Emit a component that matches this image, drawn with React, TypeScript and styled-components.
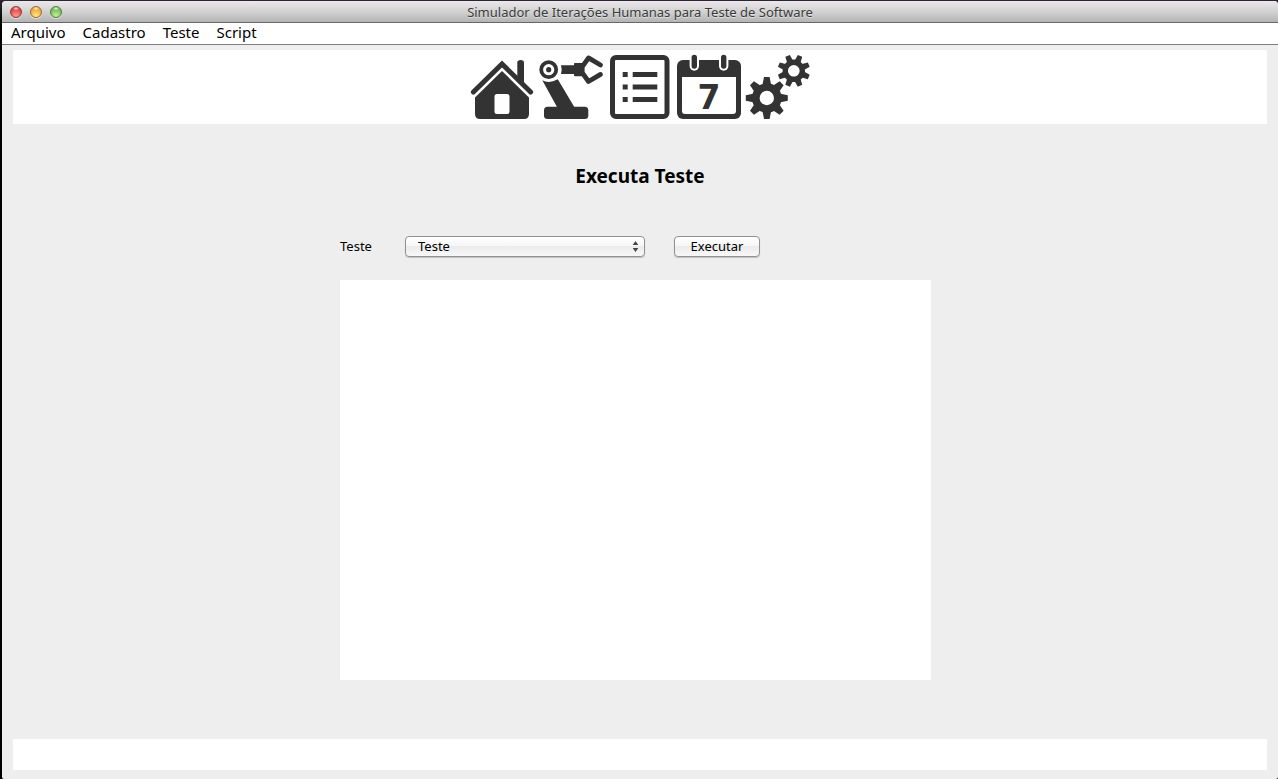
import React from "react";
import styled, { createGlobalStyle } from "styled-components";

const INK = "#333333";

const GlobalStyle = createGlobalStyle`
  *, *::before, *::after { box-sizing: border-box; }
  body {
    margin: 0;
    background: #000;
    font-family: "Noto Sans", "Open Sans", sans-serif;
    color: #000;
  }
`;

const Desktop = styled.div`
  min-height: 100vh;
  display: flex;
  padding: 1px 0 0 2px;
  background: linear-gradient(#2a2730, #000 24px);
`;

const Window = styled.div`
  flex: 1;
  min-width: 0;
  display: flex;
  flex-direction: column;
  background: #eeeeee;
  border-radius: 4px 4px 2px 2px;
  overflow: hidden;
`;

const TitleBar = styled.header`
  display: grid;
  grid-template-columns: 1fr auto 1fr;
  align-items: center;
  height: 22px;
  padding: 0 8px;
  border-bottom: 1px solid #686868;
  background: linear-gradient(#ebe7eb, #d2d2d2 50%, #b4b4b4);
`;

const WindowControls = styled.div`
  display: flex;
  gap: 8px;
`;

const Light = styled.button<{ $edge: string; $base: string; $glow: string }>`
  width: 12px;
  height: 12px;
  padding: 0;
  border: 1px solid ${(p) => p.$edge};
  border-radius: 50%;
  background:
    radial-gradient(ellipse 3px 2px at 50% 15%, #ffffffdd, #ffffff00),
    radial-gradient(circle at 50% 90%, ${(p) => p.$glow}, ${(p) => p.$base} 70%);
  box-shadow: 0 1px 0 #ffffff88;
`;

const WindowTitle = styled.span`
  font-size: 13px;
  line-height: 20px;
  color: #3a3a3a;
  text-shadow: 0 1px 0 #ffffff80;
  white-space: nowrap;
`;

const MenuBar = styled.nav`
  display: flex;
  align-items: flex-start;
  gap: 17px;
  height: 22px;
  padding: 0 9px;
  background: #fff;
  border-bottom: 1px solid #808080;
`;

const MenuButton = styled.button`
  padding: 0;
  border: 0;
  background: none;
  font: inherit;
  font-size: 15px;
  line-height: 19px;
  color: #000;
`;

const Content = styled.div`
  flex: 1;
  display: flex;
  flex-direction: column;
  padding: 5px 11px 9px;
`;

const Toolbar = styled.div`
  display: flex;
  justify-content: center;
  gap: 5px;
  padding: 5px 0;
  background: #fff;
`;

const ToolButton = styled.button`
  display: block;
  width: 64px;
  height: 64px;
  padding: 0;
  border: 0;
  background: none;

  svg {
    display: block;
    width: 64px;
    height: 64px;
    overflow: visible;
  }
`;

const Main = styled.main`
  width: 100%;
  max-width: 600px;
  margin: 0 auto;
  padding: 38px 0 59px;
`;

const Heading = styled.h1`
  margin: 0 0 46px;
  font-size: 19px;
  line-height: 28px;
  font-weight: 700;
  text-align: center;
`;

const Form = styled.form`
  display: flex;
  align-items: center;
  height: 21px;
  margin-bottom: 23px;
  font-size: 13px;
  line-height: 19px;
`;

const Label = styled.label`
  width: 65px;
`;

const controlFace = `
  height: 21px;
  border: 1px solid #919191;
  border-radius: 4px;
  background: linear-gradient(#ffffff, #f6f6f6 45%, #ebebeb 50%, #f8f8f8);
  box-shadow: 0 1px 1px #00000030;
  font: inherit;
  color: #000;
`;

const SelectBox = styled.div`
  position: relative;
  width: 240px;
  margin-right: 29px;

  svg {
    position: absolute;
    top: 5px;
    right: 6px;
    width: 7px;
    height: 11px;
    pointer-events: none;
  }
`;

const Select = styled.select`
  ${controlFace}
  display: block;
  width: 100%;
  padding: 0 20px 1px 12px;
  appearance: none;
`;

const RunButton = styled.button`
  ${controlFace}
  width: 86px;
  padding: 0;
`;

const Output = styled.textarea`
  display: block;
  width: calc(100% - 9px);
  height: 400px;
  padding: 4px;
  border: 0;
  background: #fff;
  resize: none;
`;

const StatusBar = styled.footer`
  height: 31px;
  margin-top: auto;
  background: #fff;
`;

const HomeIcon = () => (
  <svg viewBox="0 0 64 64" fill={INK} aria-hidden="true">
    <path d="M47.3 23V7.5Q47.3 5 50.6 5T54 7.5V29Z" />
    <path d="M3.4 37 32 9 60.6 37" fill="none" stroke={INK} strokeWidth="5" strokeLinecap="round" />
    <path d="M32 16 59 42.5V59Q59 64 54 64H10Q5 64 5 59V42.5Z" />
    <rect x="24.5" y="39" width="15" height="20" rx="2.5" fill="#fff" />
  </svg>
);

const RobotIcon = () => (
  <svg viewBox="0 0 64 64" fill={INK} aria-hidden="true">
    <circle cx="9.7" cy="14.7" r="7.5" fill="none" stroke={INK} strokeWidth="3.8" />
    <circle cx="9.7" cy="14.7" r="2.6" />
    <path d="M22 10.3H35V8.6Q35 8 36 8H44V21.3H36Q35 21.3 35 20.5V19H22Q23.3 14.7 22 10.3Z" />
    <path
      d="M61.5 10 49.5 2.9 43.2 11.8V17.6L49.5 26.5 61.5 19.4"
      fill="none"
      stroke={INK}
      strokeWidth="4.8"
      strokeLinecap="round"
      strokeLinejoin="round"
    />
    <path d="M3.3 25.3Q10 29 18.8 24.3L35.3 52H18Z" />
    <rect x="5" y="51.7" width="44.3" height="12.3" rx="3.5" />
  </svg>
);

const ListIcon = () => (
  <svg viewBox="0 0 64 64" fill={INK} aria-hidden="true">
    <rect x="4.5" y="2.5" width="54.5" height="59" rx="3.5" fill="none" stroke={INK} strokeWidth="5" />
    {[17, 29.5, 42].map((y) => (
      <g key={y}>
        <rect x="14.7" y={y} width="5" height="5" />
        <rect x="24.7" y={y} width="24.6" height="5" />
      </g>
    ))}
  </svg>
);

const CalendarIcon = () => (
  <svg viewBox="0 0 64 64" fill={INK} aria-hidden="true">
    <rect y="5" width="64" height="59" rx="6" />
    <path d="M5 22H59V56Q59 59 56 59H8Q5 59 5 56Z" fill="#fff" />
    {[17.3, 46.7].map((x) => (
      <g key={x} strokeLinecap="round">
        <path d={`M${x} 2.5V11`} stroke="#fff" strokeWidth="9.4" />
        <path d={`M${x} 2.5V11`} stroke={INK} strokeWidth="5.4" />
      </g>
    ))}
    <text x="32" y="54" textAnchor="middle" fontFamily="DejaVu Sans, sans-serif" fontWeight="700" fontSize="33">
      7
    </text>
  </svg>
);

type GearProps = { cx: number; cy: number; body: number; reach: number; hole: number; tip: number; base: number; turn: number };

const Gear = ({ cx, cy, body, reach, hole, tip, base, turn }: GearProps) => (
  <g transform={`translate(${cx} ${cy}) rotate(${turn})`}>
    <circle r={(body + hole) / 2} fill="none" stroke={INK} strokeWidth={body - hole} />
    {[0, 45, 90, 135, 180, 225, 270, 315].map((angle) => (
      <path
        key={angle}
        transform={`rotate(${angle})`}
        d={`M${-base} ${1 - body}L${-tip} ${-reach}H${tip}L${base} ${1 - body}Z`}
      />
    ))}
  </g>
);

const GearsIcon = () => (
  <svg viewBox="0 0 64 64" fill={INK} aria-hidden="true">
    <Gear cx={20.8} cy={43} body={14.8} reach={21} hole={7.2} tip={2.8} base={4.2} turn={0} />
    <Gear cx={47.8} cy={15.8} body={11.2} reach={16.2} hole={5.8} tip={2.4} base={3.1} turn={22.5} />
  </svg>
);

const tools = [
  { name: "Início", Icon: HomeIcon },
  { name: "Robô", Icon: RobotIcon },
  { name: "Lista", Icon: ListIcon },
  { name: "Agenda", Icon: CalendarIcon },
  { name: "Configurações", Icon: GearsIcon },
];

export default function App() {
  return (
    <>
      <GlobalStyle />
      <Desktop>
        <Window>
          <TitleBar>
            <WindowControls>
              <Light aria-label="Fechar" $edge="#963434" $base="#e0474a" $glow="#ff9a92" />
              <Light aria-label="Minimizar" $edge="#a06a2a" $base="#eda83c" $glow="#ffe98a" />
              <Light aria-label="Ampliar" $edge="#4f7f3c" $base="#78b85a" $glow="#c6f29c" />
            </WindowControls>
            <WindowTitle>Simulador de Iterações Humanas para Teste de Software</WindowTitle>
          </TitleBar>
          <MenuBar>
            {["Arquivo", "Cadastro", "Teste", "Script"].map((item) => (
              <MenuButton key={item} type="button">
                {item}
              </MenuButton>
            ))}
          </MenuBar>
          <Content>
            <Toolbar>
              {tools.map(({ name, Icon }) => (
                <ToolButton key={name} type="button" aria-label={name}>
                  <Icon />
                </ToolButton>
              ))}
            </Toolbar>
            <Main>
              <Heading>Executa Teste</Heading>
              <Form onSubmit={(event) => event.preventDefault()}>
                <Label htmlFor="teste">Teste</Label>
                <SelectBox>
                  <Select id="teste" defaultValue="Teste">
                    <option>Teste</option>
                  </Select>
                  <svg viewBox="0 0 7 11" fill="#444" aria-hidden="true">
                    <path d="M3.5 0 6.3 4H.7ZM3.5 11 .7 7H6.3Z" />
                  </svg>
                </SelectBox>
                <RunButton type="submit">Executar</RunButton>
              </Form>
              <Output aria-label="Resultado" readOnly />
            </Main>
            <StatusBar />
          </Content>
        </Window>
      </Desktop>
    </>
  );
}
